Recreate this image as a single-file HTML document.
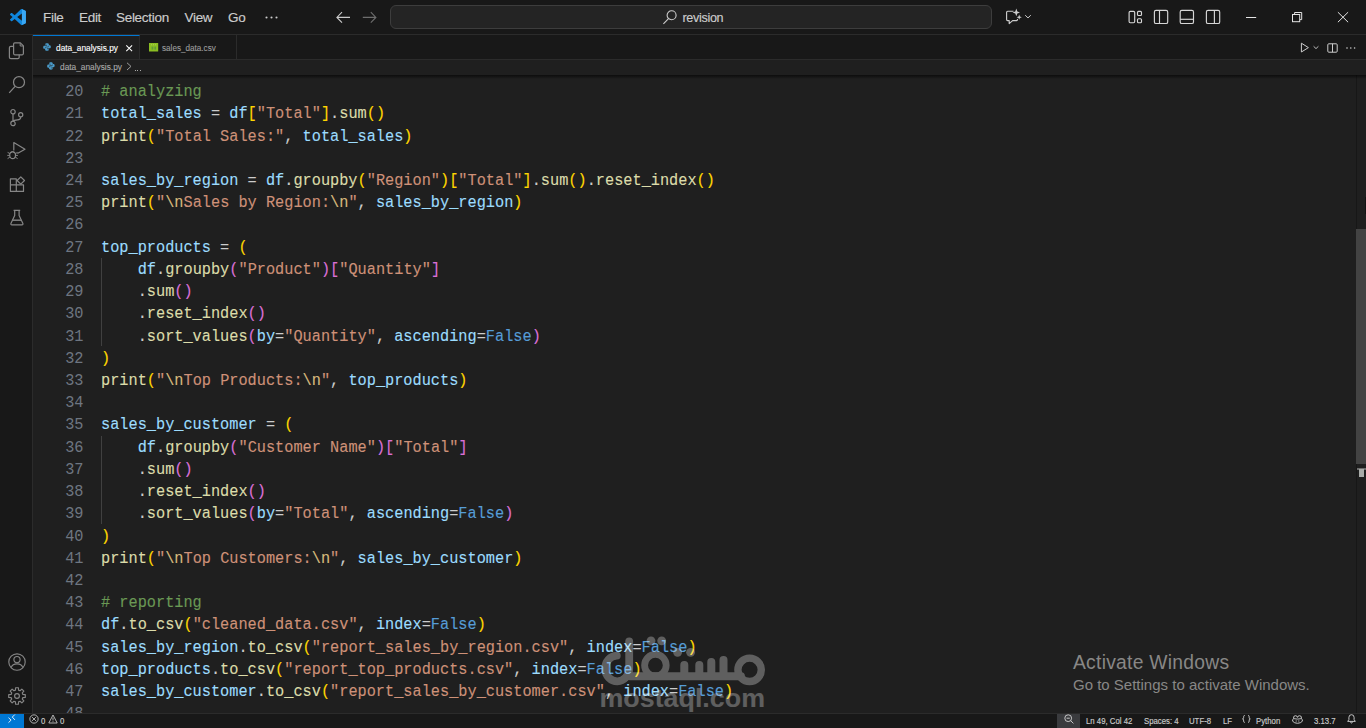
<!DOCTYPE html>
<html>
<head>
<meta charset="utf-8">
<title>data_analysis.py - revision - Visual Studio Code</title>
<style>
*{box-sizing:border-box;margin:0;padding:0}
html,body{width:1366px;height:728px;overflow:hidden;background:#1f1f1f;font-family:"Liberation Sans",sans-serif;color:#cccccc}
.abs{position:absolute}
svg{position:absolute;overflow:visible}
#titlebar{position:absolute;left:0;top:0;width:1366px;height:35px;background:#181818;border-bottom:1px solid #2b2b2b}
.menu{-webkit-text-stroke:0.15px currentColor;position:absolute;top:10px;font-size:13.5px;letter-spacing:-0.3px;line-height:16px;color:#cccccc;white-space:nowrap}
#search{position:absolute;left:390px;top:5px;width:602px;height:24px;background:#242424;border:1px solid #3d3d3d;border-radius:6px}
#activity{position:absolute;left:0;top:35px;width:33px;height:678px;background:#181818;border-right:1px solid #2b2b2b}
#tabs{position:absolute;left:33px;top:35px;width:1333px;height:25px;background:#181818;border-bottom:1px solid #2b2b2b}
.tab{position:absolute;top:0;height:25px;border-right:1px solid #2b2b2b;font-size:8.7px;white-space:nowrap}
#tab1{left:0;width:107px;background:#1f1f1f;border-top:1px solid #0078d4;height:25px}
#tab2{left:107px;width:97px;border-bottom:1px solid #2b2b2b}
.ui{-webkit-text-stroke:0.12px currentColor;position:absolute;white-space:nowrap;font-size:9.6px;line-height:12px;transform-origin:0 50%}
#crumbs{position:absolute;left:33px;top:60px;width:1333px;height:15px;background:#1f1f1f}
#editor{position:absolute;left:33px;top:75px;width:1333px;height:638px;background:#1f1f1f;overflow:hidden}
#editor .inner{position:absolute;left:-33px;top:-75px;width:1366px;height:728px}
.ln{position:absolute;left:40px;width:43.5px;text-align:right;font-family:"Liberation Mono",monospace;font-size:15.27px;line-height:21.874px;height:21.874px;transform:scaleY(1.04);transform-origin:0 14px;color:#6e7681;white-space:pre}
.cl{position:absolute;left:101px;-webkit-text-stroke:0.12px currentColor;font-family:"Liberation Mono",monospace;font-size:15.27px;line-height:21.874px;height:21.874px;transform:scaleY(1.04);transform-origin:0 14px;color:#cccccc;white-space:pre}
.c{color:#6a9955}.v{color:#9cdcfe}.o{color:#cccccc}.f{color:#dcdcaa}.s{color:#ce9178}.e{color:#d7ba7d}.k{color:#569cd6}.b1{color:#ffd700}.b2{color:#da70d6}
.guide{position:absolute;left:101px;width:1px;background:#404040}
#shadow{position:absolute;left:33px;top:75px;width:1333px;height:4px;background:linear-gradient(#000000 0%,rgba(0,0,0,0) 100%);opacity:.6}
#scroll{position:absolute;left:1356px;top:75px;width:10px;height:638px;border-left:1px solid #171717}
#slider{position:absolute;left:1356px;top:229px;width:10px;height:235px;background:#434343}
#status{position:absolute;left:0;top:713px;width:1366px;height:15px;background:#181818;border-top:1px solid #2b2b2b}
#remote{position:absolute;left:0;top:714px;width:24px;height:14px;background:#0078d4}
.st{-webkit-text-stroke:0.15px currentColor;position:absolute;top:715.8px;font-size:8.4px;line-height:11px;color:#cccccc;white-space:nowrap;transform-origin:0 50%;transform:scaleX(.93)}
</style>
</head>
<body>
<!-- TITLE BAR -->
<div id="titlebar"></div>
<div class="menu" style="left:43px">File</div>
<div class="menu" style="left:79px">Edit</div>
<div class="menu" style="left:116px">Selection</div>
<div class="menu" style="left:184.5px">View</div>
<div class="menu" style="left:228px">Go</div>
<div id="search"></div>
<div class="menu" style="left:682.5px;top:10.3px;font-size:12.6px;letter-spacing:-0.33px">revision</div>


<!-- VS Code logo -->
<svg style="left:9.8px;top:9px" width="15.9" height="16.2" viewBox="0 0 24 24" preserveAspectRatio="none"><path fill="#0f86dd" d="M23.15 2.587L18.21.21a1.494 1.494 0 0 0-1.705.29l-9.46 8.63-4.12-3.128a.999.999 0 0 0-1.276.057L.327 7.261A1 1 0 0 0 .326 8.74L3.899 12 .326 15.26a1 1 0 0 0 .001 1.479L1.65 17.94a.999.999 0 0 0 1.276.057l4.12-3.128 9.46 8.63a1.492 1.492 0 0 0 1.704.29l4.942-2.377A1.5 1.5 0 0 0 24 20.06V3.939a1.5 1.5 0 0 0-.85-1.352zm-5.146 14.861L10.826 12l7.178-5.448v10.896z"/><path fill="#3aa7f3" d="M18.004.12L23.15 2.587A1.5 1.5 0 0 1 24 3.939V20.06a1.5 1.5 0 0 1-.85 1.353L18.004 23.88z"/></svg>
<!-- menu dots -->
<svg style="left:265px;top:15.5px" width="13" height="3" viewBox="0 0 13 3"><circle cx="1.5" cy="1.5" r="1.05" fill="#ccc"/><circle cx="6.5" cy="1.5" r="1.05" fill="#ccc"/><circle cx="11.5" cy="1.5" r="1.05" fill="#ccc"/></svg>
<!-- nav arrows -->
<svg style="left:336px;top:11px" width="15" height="13" viewBox="0 0 15 13" fill="none" stroke="#cccccc" stroke-width="1.1"><path d="M1 6.4H14M6 1.2L0.9 6.4L6 11.6"/></svg>
<svg style="left:361.6px;top:11px" width="15" height="13" viewBox="0 0 15 13" fill="none" stroke="#6d6d6d" stroke-width="1.1"><path d="M0.8 6.4H13.8M8.8 1.2L13.9 6.4L8.8 11.6"/></svg>
<!-- search icon -->
<svg style="left:662px;top:9px" width="16" height="16" viewBox="0 0 16 16" fill="none" stroke="#cccccc" stroke-width="1.1"><circle cx="9.6" cy="6.2" r="4.5"/><path d="M6.5 9.6L1.4 14.8"/></svg>
<!-- copilot chat -->
<svg style="left:1005px;top:8px" width="28" height="17" viewBox="0 0 28 17" fill="none" stroke="#cccccc" stroke-width="1.15" stroke-linejoin="round"><path d="M8.5 3.2H2.6Q1.6 3.2 1.6 4.2V11.6Q1.6 12.6 2.6 12.6H4.2V15.6L7.6 12.6H11.5Q12.5 12.6 12.5 11.6V11"/><path fill="#cccccc" stroke="none" d="M11.3 0.6L12.3 3.4L15 4.4L12.3 5.4L11.3 8.2L10.3 5.4L7.6 4.4L10.3 3.4ZM14.2 6.6L14.9 8.5L16.8 9.2L14.9 9.9L14.2 11.8L13.5 9.9L11.6 9.2L13.5 8.5Z"/><path d="M20.2 7.2L23 9.9L25.8 7.2" stroke-width="1"/></svg>
<!-- layout icons + window controls -->
<svg style="left:0;top:0" width="1366" height="35" viewBox="0 0 1366 35" fill="none" stroke="#d6d6d6" stroke-width="1.15">
<rect x="1129.1" y="11.4" width="5.6" height="11.3" rx="1.2"/><rect x="1137.5" y="11.4" width="4" height="4.1" rx="1"/><rect x="1137.5" y="18.7" width="4" height="4" rx="1"/>
<rect x="1154.4" y="10.4" width="13.3" height="13.1" rx="1.6"/><path d="M1159.5 10.4V23.5"/>
<rect x="1180.2" y="10.4" width="13.3" height="13.1" rx="1.6"/><path d="M1180.2 19.3H1193.5"/>
<rect x="1206.4" y="10.4" width="13.3" height="13.1" rx="1.6"/><path d="M1214.4 10.4V23.5"/>
<g stroke="#e4e4e4" stroke-width="1"><path d="M1246 17.5H1256.2"/>
<rect x="1292.5" y="14.5" width="7.2" height="7.2"/><path d="M1294.6 14.2V12.5H1301.7V19.6H1300"/>
<path d="M1337.9 12.2L1348.1 22.2M1348.1 12.2L1337.9 22.2"/></g>
</svg>

<!-- ACTIVITY BAR -->
<div id="activity"></div>


<!-- activity icons -->
<svg style="left:8px;top:41px" width="17" height="19" viewBox="0 0 17 19" fill="none" stroke="#868686" stroke-width="1.2" stroke-linejoin="round"><path d="M6.8 1.8H12.4L15.4 4.8V12.6Q15.4 13.8 14.2 13.8H6.8Q5.6 13.8 5.6 12.6V3Q5.6 1.8 6.8 1.8Z"/><path d="M12.2 1.9V5H15.3" stroke-width="1"/><path d="M5.6 5.4H2.8Q1.4 5.4 1.4 6.8V16.2Q1.4 17.6 2.8 17.6H9.8Q11.2 17.6 11.2 16.2V13.8"/></svg>
<svg style="left:8px;top:75px" width="18" height="19" viewBox="0 0 18 19" fill="none" stroke="#868686" stroke-width="1.25"><circle cx="11" cy="7.2" r="5.5"/><path d="M7.1 11.3L1.2 17.8"/></svg>
<svg style="left:9px;top:108px" width="16" height="19" viewBox="0 0 16 19" fill="none" stroke="#868686" stroke-width="1.2"><circle cx="4" cy="3.7" r="2.2"/><circle cx="4" cy="15.4" r="2.2"/><circle cx="11.7" cy="6.8" r="2.1"/><path d="M4 5.9V13.2M11.7 8.9Q11.7 11.6 8.5 11.9Q4.6 12.3 4 13.2"/></svg>
<svg style="left:7px;top:141px" width="20" height="19" viewBox="0 0 20 19" fill="none" stroke="#868686" stroke-width="1.2" stroke-linejoin="round"><path d="M6.8 9.6V1.5L18 8.3L10.4 12.6"/><ellipse cx="5.6" cy="14.2" rx="2.9" ry="3.4"/><path d="M3.4 11.6Q5.6 9.4 7.8 11.6M0.6 11.4L2.9 12.6M0.3 14.4H2.7M0.6 17.6L2.9 16.1M10.6 11.4L8.3 12.6M10.9 14.4H8.5M10.6 17.6L8.3 16.1" stroke-width="1"/></svg>
<svg style="left:9px;top:176px" width="17" height="17" viewBox="0 0 17 17" fill="none" stroke="#868686" stroke-width="1.2" stroke-linejoin="round"><path d="M7.3 2.9H1.4V15.4H14.5V8.9H7.3ZM1.4 8.9H7.3V15.4"/><rect x="9.2" y="1.9" width="5.2" height="5.2" transform="rotate(45 11.8 4.5)"/></svg>
<svg style="left:10px;top:209px" width="14" height="17" viewBox="0 0 14 17" fill="none" stroke="#868686" stroke-width="1.2" stroke-linejoin="round"><path d="M3.6 1.4H10.2M4.7 1.4V6.4L0.9 14.6Q0.6 15.8 1.8 15.8H12Q13.2 15.8 12.9 14.6L9.1 6.4V1.4"/><path d="M2.6 11.2H11.2" stroke-width="1.4"/></svg>
<svg style="left:7.7px;top:652.5px" width="18" height="18" viewBox="0 0 18 18" fill="none" stroke="#868686" stroke-width="1.15"><circle cx="9" cy="9" r="8.2"/><circle cx="9" cy="6.6" r="3.1"/><path d="M3.2 14.6Q4.4 10.9 9 10.9Q13.6 10.9 14.8 14.6"/></svg>
<svg style="left:7.7px;top:686.5px" width="18" height="18" viewBox="0 0 18 18" fill="none" stroke="#868686" stroke-width="1.15" stroke-linejoin="round"><path d="M7.43 3.11 L7.58 0.72 L10.42 0.72 L10.57 3.11 L12.06 3.72 L13.85 2.14 L15.86 4.15 L14.28 5.94 L14.89 7.43 L17.28 7.58 L17.28 10.42 L14.89 10.57 L14.28 12.06 L15.86 13.85 L13.85 15.86 L12.06 14.28 L10.57 14.89 L10.42 17.28 L7.58 17.28 L7.43 14.89 L5.94 14.28 L4.15 15.86 L2.14 13.85 L3.72 12.06 L3.11 10.57 L0.72 10.42 L0.72 7.58 L3.11 7.43 L3.72 5.94 L2.14 4.15 L4.15 2.14 L5.94 3.72Z"/><circle cx="9" cy="9" r="2.4"/></svg>

<!-- TABS -->
<div id="tabs">
  <div class="tab" id="tab1"></div>
  <div class="tab" id="tab2"></div>
</div>
<div class="ui" style="left:55.6px;top:41.6px;color:#ffffff;transform:scaleX(.867)">data_analysis.py</div>
<div class="ui" style="left:161.7px;top:41.9px;color:#9d9d9d;transform:scaleX(.848)">sales_data.csv</div>


<div id="crumbs"></div>
<div class="abs" style="left:33px;top:59px;width:106px;height:1px;background:#2a2a2a"></div>
<!-- tab icons -->
<svg style="left:43px;top:43.4px" width="8" height="8" viewBox="0 0 16 16"><path fill="#4a9ac8" d="M7.9 0.3C5.2 0.3 4.3 1.4 4.3 2.7V4.6H8.1V5.3H2.8C1.2 5.3 0.3 6.6 0.3 8.6C0.3 10.6 1.2 11.7 2.8 11.7H4.2V9.6C4.2 8.2 5.3 7.3 6.7 7.3H9.9C11 7.3 11.8 6.5 11.8 5.4V2.7C11.8 1.3 10.4 0.3 7.9 0.3ZM5.9 1.7A0.8 0.8 0 1 1 5.9 3.3A0.8 0.8 0 1 1 5.9 1.7Z"/><path fill="#4a9ac8" d="M8.1 15.7C10.8 15.7 11.7 14.6 11.7 13.3V11.4H7.9V10.7H13.2C14.8 10.7 15.7 9.4 15.7 7.4C15.7 5.4 14.8 4.3 13.2 4.3H11.8V6.4C11.8 7.8 10.7 8.7 9.3 8.7H6.1C5 8.7 4.2 9.5 4.2 10.6V13.3C4.2 14.7 5.6 15.7 8.1 15.7ZM10.1 14.3A0.8 0.8 0 1 1 10.1 12.7A0.8 0.8 0 1 1 10.1 14.3Z"/></svg>
<svg style="left:47.3px;top:62.2px" width="7.8" height="7.8" viewBox="0 0 16 16"><path fill="#4a9ac8" d="M7.9 0.3C5.2 0.3 4.3 1.4 4.3 2.7V4.6H8.1V5.3H2.8C1.2 5.3 0.3 6.6 0.3 8.6C0.3 10.6 1.2 11.7 2.8 11.7H4.2V9.6C4.2 8.2 5.3 7.3 6.7 7.3H9.9C11 7.3 11.8 6.5 11.8 5.4V2.7C11.8 1.3 10.4 0.3 7.9 0.3ZM5.9 1.7A0.8 0.8 0 1 1 5.9 3.3A0.8 0.8 0 1 1 5.9 1.7Z"/><path fill="#4a9ac8" d="M8.1 15.7C10.8 15.7 11.7 14.6 11.7 13.3V11.4H7.9V10.7H13.2C14.8 10.7 15.7 9.4 15.7 7.4C15.7 5.4 14.8 4.3 13.2 4.3H11.8V6.4C11.8 7.8 10.7 8.7 9.3 8.7H6.1C5 8.7 4.2 9.5 4.2 10.6V13.3C4.2 14.7 5.6 15.7 8.1 15.7ZM10.1 14.3A0.8 0.8 0 1 1 10.1 12.7A0.8 0.8 0 1 1 10.1 14.3Z"/></svg>
<!-- close x -->
<svg style="left:125.8px;top:44.8px" width="6.4" height="6.4" viewBox="0 0 6.4 6.4" fill="none" stroke="#ffffff" stroke-width="1.05"><path d="M0.3 0.3L6.1 6.1M6.1 0.3L0.3 6.1"/></svg>
<!-- csv icon -->
<svg style="left:149px;top:42.7px" width="9.2" height="8.5" viewBox="0 0 9.2 8.5"><rect x="0" y="0" width="9.2" height="8.5" fill="#8bbd22"/><rect x="2" y="1.4" width="0.9" height="0.8" fill="#b7d96b"/><rect x="4.1" y="1.4" width="0.9" height="0.8" fill="#b7d96b"/><rect x="6.2" y="1.4" width="0.9" height="0.8" fill="#b7d96b"/><rect x="2.6" y="3.6" width="1.7" height="3" fill="#5f9a3a"/><rect x="5.4" y="3.6" width="1.7" height="3" fill="#5f9a3a"/></svg>
<!-- breadcrumb chevron and dots -->
<svg style="left:126px;top:62px" width="7" height="9" viewBox="0 0 7 9" fill="none" stroke="#a9a9a9" stroke-width="0.9"><path d="M1 0.8L5 4.4L1 8"/></svg>
<div class="abs" style="left:135px;top:70px;width:1.2px;height:1.1px;background:#a9a9a9"></div>
<div class="abs" style="left:137.3px;top:70px;width:1.2px;height:1.1px;background:#a9a9a9"></div>
<div class="abs" style="left:139.6px;top:70px;width:1.2px;height:1.1px;background:#a9a9a9"></div>
<!-- editor actions -->
<svg style="left:1300px;top:42px" width="20" height="11" viewBox="0 0 20 11" fill="none" stroke="#cccccc" stroke-width="1" stroke-linejoin="round"><path d="M1.4 1.2L8.4 5.6L1.4 10V1.2Z"/><path d="M13.6 4.3L16 6.6L18.4 4.3" stroke-width="0.9"/></svg>
<svg style="left:1327px;top:42.5px" width="11" height="10" viewBox="0 0 11 10" fill="none" stroke="#cccccc" stroke-width="1"><rect x="0.8" y="0.8" width="9.4" height="8.4" rx="1"/><path d="M5.5 0.8V9.2"/></svg>
<svg style="left:1345.5px;top:46.6px" width="10" height="2" viewBox="0 0 10 2"><circle cx="1" cy="1" r="0.8" fill="#ccc"/><circle cx="4.8" cy="1" r="0.8" fill="#ccc"/><circle cx="8.6" cy="1" r="0.8" fill="#ccc"/></svg>

<!-- BREADCRUMBS -->
<div class="ui" style="left:59.6px;top:60.6px;color:#a9a9a9;transform:scaleX(.867)">data_analysis.py</div>

<!-- EDITOR -->
<div id="editor"><div class="inner">
<div class="guide" style="top:258px;height:88px"></div>
<div class="guide" style="top:436px;height:88px"></div>
<div class="ln" style="top:82.00px">20</div><div class="cl" style="top:82.00px"><span class="c"># analyzing</span></div>
<div class="ln" style="top:104.00px">21</div><div class="cl" style="top:104.00px"><span class="v">total_sales</span><span class="o"> = </span><span class="v">df</span><span class="b1">[</span><span class="s">"Total"</span><span class="b1">]</span><span class="o">.</span><span class="f">sum</span><span class="b1">()</span></div>
<div class="ln" style="top:127.00px">22</div><div class="cl" style="top:127.00px"><span class="f">print</span><span class="b1">(</span><span class="s">"Total Sales:"</span><span class="o">, </span><span class="v">total_sales</span><span class="b1">)</span></div>
<div class="ln" style="top:149.00px">23</div><div class="cl" style="top:149.00px"></div>
<div class="ln" style="top:171.00px">24</div><div class="cl" style="top:171.00px"><span class="v">sales_by_region</span><span class="o"> = </span><span class="v">df</span><span class="o">.</span><span class="f">groupby</span><span class="b1">(</span><span class="s">"Region"</span><span class="b1">)</span><span class="b1">[</span><span class="s">"Total"</span><span class="b1">]</span><span class="o">.</span><span class="f">sum</span><span class="b1">()</span><span class="o">.</span><span class="f">reset_index</span><span class="b1">()</span></div>
<div class="ln" style="top:193.00px">25</div><div class="cl" style="top:193.00px"><span class="f">print</span><span class="b1">(</span><span class="s">"</span><span class="e">\n</span><span class="s">Sales by Region:</span><span class="e">\n</span><span class="s">"</span><span class="o">, </span><span class="v">sales_by_region</span><span class="b1">)</span></div>
<div class="ln" style="top:215.00px">26</div><div class="cl" style="top:215.00px"></div>
<div class="ln" style="top:238.00px">27</div><div class="cl" style="top:238.00px"><span class="v">top_products</span><span class="o"> = </span><span class="b1">(</span></div>
<div class="ln" style="top:260.00px">28</div><div class="cl" style="top:260.00px"><span class="o">    </span><span class="v">df</span><span class="o">.</span><span class="f">groupby</span><span class="b2">(</span><span class="s">"Product"</span><span class="b2">)</span><span class="b2">[</span><span class="s">"Quantity"</span><span class="b2">]</span></div>
<div class="ln" style="top:282.00px">29</div><div class="cl" style="top:282.00px"><span class="o">    .</span><span class="f">sum</span><span class="b2">()</span></div>
<div class="ln" style="top:304.00px">30</div><div class="cl" style="top:304.00px"><span class="o">    .</span><span class="f">reset_index</span><span class="b2">()</span></div>
<div class="ln" style="top:327.00px">31</div><div class="cl" style="top:327.00px"><span class="o">    .</span><span class="f">sort_values</span><span class="b2">(</span><span class="v">by</span><span class="o">=</span><span class="s">"Quantity"</span><span class="o">, </span><span class="v">ascending</span><span class="o">=</span><span class="k">False</span><span class="b2">)</span></div>
<div class="ln" style="top:349.00px">32</div><div class="cl" style="top:349.00px"><span class="b1">)</span></div>
<div class="ln" style="top:371.00px">33</div><div class="cl" style="top:371.00px"><span class="f">print</span><span class="b1">(</span><span class="s">"</span><span class="e">\n</span><span class="s">Top Products:</span><span class="e">\n</span><span class="s">"</span><span class="o">, </span><span class="v">top_products</span><span class="b1">)</span></div>
<div class="ln" style="top:393.00px">34</div><div class="cl" style="top:393.00px"></div>
<div class="ln" style="top:415.00px">35</div><div class="cl" style="top:415.00px"><span class="v">sales_by_customer</span><span class="o"> = </span><span class="b1">(</span></div>
<div class="ln" style="top:438.00px">36</div><div class="cl" style="top:438.00px"><span class="o">    </span><span class="v">df</span><span class="o">.</span><span class="f">groupby</span><span class="b2">(</span><span class="s">"Customer Name"</span><span class="b2">)</span><span class="b2">[</span><span class="s">"Total"</span><span class="b2">]</span></div>
<div class="ln" style="top:460.00px">37</div><div class="cl" style="top:460.00px"><span class="o">    .</span><span class="f">sum</span><span class="b2">()</span></div>
<div class="ln" style="top:482.00px">38</div><div class="cl" style="top:482.00px"><span class="o">    .</span><span class="f">reset_index</span><span class="b2">()</span></div>
<div class="ln" style="top:504.00px">39</div><div class="cl" style="top:504.00px"><span class="o">    .</span><span class="f">sort_values</span><span class="b2">(</span><span class="v">by</span><span class="o">=</span><span class="s">"Total"</span><span class="o">, </span><span class="v">ascending</span><span class="o">=</span><span class="k">False</span><span class="b2">)</span></div>
<div class="ln" style="top:527.00px">40</div><div class="cl" style="top:527.00px"><span class="b1">)</span></div>
<div class="ln" style="top:549.00px">41</div><div class="cl" style="top:549.00px"><span class="f">print</span><span class="b1">(</span><span class="s">"</span><span class="e">\n</span><span class="s">Top Customers:</span><span class="e">\n</span><span class="s">"</span><span class="o">, </span><span class="v">sales_by_customer</span><span class="b1">)</span></div>
<div class="ln" style="top:571.00px">42</div><div class="cl" style="top:571.00px"></div>
<div class="ln" style="top:593.00px">43</div><div class="cl" style="top:593.00px"><span class="c"># reporting</span></div>
<div class="ln" style="top:615.00px">44</div><div class="cl" style="top:615.00px"><span class="v">df</span><span class="o">.</span><span class="f">to_csv</span><span class="b1">(</span><span class="s">"cleaned_data.csv"</span><span class="o">, </span><span class="v">index</span><span class="o">=</span><span class="k">False</span><span class="b1">)</span></div>
<div class="ln" style="top:638.00px">45</div><div class="cl" style="top:638.00px"><span class="v">sales_by_region</span><span class="o">.</span><span class="f">to_csv</span><span class="b1">(</span><span class="s">"report_sales_by_region.csv"</span><span class="o">, </span><span class="v">index</span><span class="o">=</span><span class="k">False</span><span class="b1">)</span></div>
<div class="ln" style="top:660.00px">46</div><div class="cl" style="top:660.00px"><span class="v">top_products</span><span class="o">.</span><span class="f">to_csv</span><span class="b1">(</span><span class="s">"report_top_products.csv"</span><span class="o">, </span><span class="v">index</span><span class="o">=</span><span class="k">False</span><span class="b1">)</span></div>
<div class="ln" style="top:682.00px">47</div><div class="cl" style="top:682.00px"><span class="v">sales_by_customer</span><span class="o">.</span><span class="f">to_csv</span><span class="b1">(</span><span class="s">"report_sales_by_customer.csv"</span><span class="o">, </span><span class="v">index</span><span class="o">=</span><span class="k">False</span><span class="b1">)</span></div>
<div class="ln" style="top:704.00px">48</div><div class="cl" style="top:704.00px"></div>
</div></div>
<div id="scroll"></div>
<div id="slider"></div>
<div class="abs" style="left:1357px;top:468.4px;width:9px;height:1.4px;background:#6c6c6c"></div>
<div class="abs" style="left:1359px;top:469px;width:5px;height:7.8px;background:#a9aca9"></div>
<div class="abs" style="left:1365px;top:197px;width:1px;height:17px;background:#131313"></div>

<div id="shadow"></div>
<!-- STATUS BAR -->
<div id="status"></div>
<div id="remote"></div>
<div class="st" style="left:41px">0</div>
<div class="st" style="left:60px">0</div>
<div class="st" style="left:1085.5px">Ln 49, Col 42</div>
<div class="st" style="left:1144px">Spaces: 4</div>
<div class="st" style="left:1189px">UTF-8</div>
<div class="st" style="left:1222.5px">LF</div>
<div class="st" style="left:1255.5px">Python</div>
<div class="st" style="left:1313.5px">3.13.7</div>


<!-- status icons -->
<svg style="left:0;top:708px" width="24" height="20" viewBox="0 708 24 20" fill="none" stroke="#e8f3fc" stroke-width="0.95"><path d="M8.5 717.7L11.1 720.1L8.5 722.6M14.9 714.5L12.3 717.1L14.9 719.9"/></svg>
<svg style="left:29.4px;top:714px" width="10" height="10" viewBox="0 0 10 10" fill="none" stroke="#cccccc" stroke-width="0.85"><circle cx="5" cy="5" r="4.15"/><path d="M3.1 3.1L6.9 6.9M6.9 3.1L3.1 6.9"/></svg>
<svg style="left:48.2px;top:713.8px" width="10" height="10" viewBox="0 0 10 10" fill="none" stroke="#cccccc" stroke-width="0.85" stroke-linejoin="round"><path d="M5 1L9.2 9H0.8Z"/><path d="M5 3.6V6.4M5 7.3V8.1"/></svg>
<div class="abs" style="left:1057px;top:714px;width:23px;height:14px;background:#3a3b3e"></div>
<svg style="left:1063.5px;top:714.2px" width="10" height="10" viewBox="0 0 10 10" fill="none" stroke="#cccccc" stroke-width="0.95"><circle cx="4.2" cy="4.2" r="3.4"/><path d="M6.6 6.6L9.4 9.4M2.6 4.2H5.8"/></svg>
<svg style="left:1242.3px;top:715px" width="9" height="8" viewBox="0 0 9 8" fill="none" stroke="#cccccc" stroke-width="0.9"><path d="M2.8 0.5Q1.6 0.5 1.6 1.6V2.8Q1.6 3.8 0.5 3.9Q1.6 4 1.6 5V6.3Q1.6 7.4 2.8 7.4M6 0.5Q7.2 0.5 7.2 1.6V2.8Q7.2 3.8 8.3 3.9Q7.2 4 7.2 5V6.3Q7.2 7.4 6 7.4"/></svg>
<svg style="left:1292px;top:714.6px" width="11" height="9" viewBox="0 0 11 9" fill="none" stroke="#cccccc" stroke-width="0.95" stroke-linejoin="round"><path d="M1.5 3.6Q1.2 0.7 3.4 0.7Q5.3 0.7 5.5 2.4Q5.7 0.7 7.6 0.7Q9.8 0.7 9.5 3.6Q10.6 4.6 10.4 6.2Q8.6 8.3 5.5 8.3Q2.4 8.3 0.6 6.2Q0.4 4.6 1.5 3.6Z"/><path d="M1.6 3.6Q5.5 4.6 9.4 3.6M4.2 5.4V6.6M6.8 5.4V6.6" stroke-width="0.9"/></svg>
<svg style="left:1346.8px;top:714.2px" width="9" height="10" viewBox="0 0 9 10" fill="none" stroke="#cccccc" stroke-width="0.95" stroke-linejoin="round"><path d="M4.5 0.7Q1.9 0.7 1.9 3.4V5.6L0.7 7.4H8.3L7.1 5.6V3.4Q7.1 0.7 4.5 0.7ZM3.5 7.6Q3.6 9 4.5 9Q5.4 9 5.5 7.6"/></svg>

<!-- WINDOWS ACTIVATION -->
<div class="abs" style="left:1073px;top:651px;font-size:19.3px;letter-spacing:0.26px;line-height:24px;color:#888786;white-space:nowrap">Activate Windows</div>
<div class="abs" style="left:1073px;top:676px;font-size:15px;line-height:18px;color:#888786;white-space:nowrap">Go to Settings to activate Windows.</div>


<!-- watermark -->
<svg style="left:0;top:0;opacity:.285" width="1366" height="728" viewBox="0 0 1366 728">
<g fill="none" stroke="#ffffff" stroke-linecap="round" stroke-linejoin="round">
<path stroke-width="7.8" d="M629.2 641.3V668.4A12 12.8 0 1 1 616.8 655.7"/>
<path stroke-width="7.9" d="M630 676.3H741"/>
<circle cx="655.4" cy="665.2" r="10.8" stroke-width="6.8"/>
<circle cx="749.6" cy="669.8" r="11.7" stroke-width="7.4"/>
<path stroke-width="8" d="M684.3 676V665M699.3 676V665M711.3 676V662M723.5 676V660"/>
</g>
<g fill="#ffffff"><circle cx="651" cy="640.8" r="4.4"/><circle cx="661.7" cy="640.8" r="4.4"/><circle cx="677.6" cy="652.3" r="4.4"/><circle cx="690.6" cy="652.3" r="4.4"/>
<text x="599.5" y="707" font-family="Liberation Sans, sans-serif" font-weight="bold" font-size="26.6" textLength="165.5" lengthAdjust="spacingAndGlyphs">mostaql.com</text></g>
</svg>

</body>
</html>
